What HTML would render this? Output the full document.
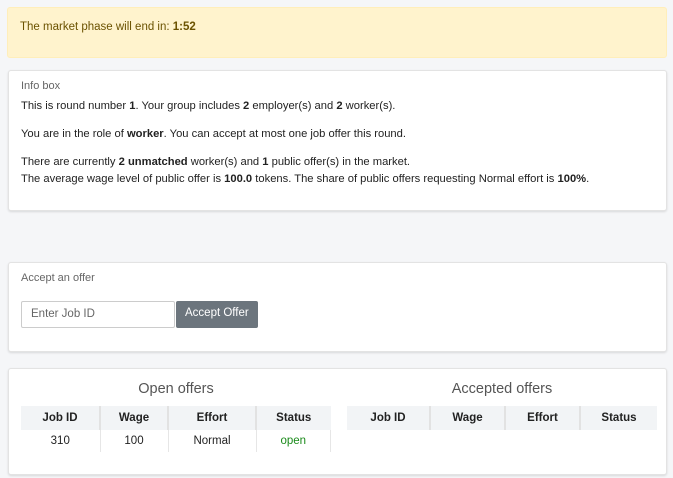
<!DOCTYPE html>
<html><head><style>
body{margin:0;background:#f5f6f8;font-family:"Liberation Sans",Arial,sans-serif;font-size:11.5px;color:#222;width:673px;height:478px;overflow:hidden;position:relative}
.abs{position:absolute;box-sizing:border-box}
.alert{left:7px;top:7px;width:660px;height:51px;background:#fff3cd;border:1px solid #ffeeba;border-radius:3px;color:#6b5200;padding:13px 12px}
.card{left:8px;width:659px;background:#fff;border:1px solid #e3e3e3;border-radius:3px;box-shadow:0 1px 2px rgba(0,0,0,.12)}
.title{color:#666;font-size:11px}
p{margin:0;line-height:17px;font-size:11.2px;white-space:nowrap}
table{border-collapse:collapse;position:absolute;font-size:11.5px}
th{background:#f2f4f6;font-weight:bold;height:24px;text-align:center;padding:0;border-right:2px solid #e2e2e2}
td{height:22px;text-align:center;padding:0;border-right:1px solid #e6e6e6}
th:last-child{border-right:0}
</style></head><body>
<div class="abs alert">The market phase will end in: <b>1:52</b></div>
<div class="abs card" style="top:70px;height:141px;padding:9px 12px">
<div class="title">Info box</div>
<p style="margin-top:6px">This is round number <b>1</b>. Your group includes <b>2</b> employer(s) and <b>2</b> worker(s).</p>
<p style="margin-top:11px">You are in the role of <b>worker</b>. You can accept at most one job offer this round.</p>
<p style="margin-top:11px">There are currently <b>2 unmatched</b> worker(s) and <b>1</b> public offer(s) in the market.</p>
<p>The average wage level of public offer is <b>100.0</b> tokens. The share of public offers requesting Normal effort is <b>100%</b>.</p>
</div>
<div class="abs card" style="top:262px;height:90px;padding:9px 12px">
<div class="title">Accept an offer</div>
<div class="abs" style="left:12px;top:38px;width:154px;height:27px;border:1px solid #ccc;border-radius:2px;color:#666;padding:6px 9px">Enter Job ID</div>
<div class="abs" style="left:167px;top:38px;width:82px;height:27px;background:#6c757d;border-radius:2px;color:#fff;padding:6px 9px">Accept Offer</div>
</div>
<div class="abs card" style="top:368px;height:107px">
<div class="abs" style="left:12px;top:12px;width:310px;text-align:center;font-size:14.5px;color:#555">Open offers</div>
<div class="abs" style="left:338px;top:12px;width:310px;text-align:center;font-size:14.5px;color:#555">Accepted offers</div>
<table style="left:12px;top:37px;width:310px"><tr><th style="width:78px">Job ID</th><th style="width:66px">Wage</th><th style="width:86px">Effort</th><th>Status</th></tr>
<tr><td>310</td><td>100</td><td>Normal</td><td style="color:#1a8a1a">open</td></tr></table>
<table style="left:338px;top:37px;width:310px"><tr><th style="width:82px">Job ID</th><th style="width:73px">Wage</th><th style="width:73px">Effort</th><th>Status</th></tr></table>
</div>
</body></html>
